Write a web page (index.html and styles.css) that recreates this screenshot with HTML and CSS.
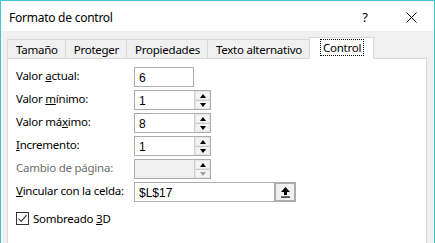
FILE: index.html
```html
<!DOCTYPE html>
<html lang="es">
<head>
<meta charset="utf-8">
<link rel="stylesheet" href="styles.css">
</head>
<body>
<div class="window">
  <div class="titlebar">
    <span class="title">Formato de control</span>
    <span class="help">?</span>
    <span class="close">
      <svg width="11" height="11" viewBox="0 0 11 11"><path d="M0.5 0.5 L10.5 10.5 M10.5 0.5 L0.5 10.5" stroke="#000" stroke-width="1"/></svg>
    </span>
  </div>
  <div class="client">
    <div class="tabs">
      <div class="tab">Tamaño</div>
      <div class="tab">Proteger</div>
      <div class="tab">Propiedades</div>
      <div class="tab">Texto alternativo</div>
      <div class="tab active"><span class="focus">Control</span></div>
    </div>
    <div class="panel">
      <div class="form">
        <label class="lbl">Valor <u>a</u>ctual:</label>
        <div class="field short"><span class="val">6</span></div>

        <label class="lbl">Valor <u>m</u>ínimo:</label>
        <div class="field spin"><span class="val">1</span>
          <span class="spinner"><span class="sb"><i class="up"></i></span><span class="sb"><i class="down"></i></span></span>
        </div>

        <label class="lbl">Valor má<u>x</u>imo:</label>
        <div class="field spin"><span class="val">8</span>
          <span class="spinner"><span class="sb"><i class="up"></i></span><span class="sb"><i class="down"></i></span></span>
        </div>

        <label class="lbl"><u>I</u>ncremento:</label>
        <div class="field spin"><span class="val">1</span>
          <span class="spinner"><span class="sb"><i class="up"></i></span><span class="sb"><i class="down"></i></span></span>
        </div>

        <label class="lbl disabled">Cambio de página:</label>
        <div class="field spin off"><span class="val"></span>
          <span class="spinner"><span class="sb"><i class="up"></i></span><span class="sb"><i class="down dim"></i></span></span>
        </div>

        <label class="lbl"><u>V</u>incular con la celda:</label>
        <div class="field long"><span class="val">$L$17</span>
          <span class="refbtn">
            <svg width="11" height="12" viewBox="0 0 11 12"><path d="M5.5 1 L10 6 L7 6 L7 9 L4 9 L4 6 L1 6 Z" fill="#000"/><rect x="1" y="10.5" width="9" height="1.2" fill="#000"/></svg>
          </span>
        </div>
      </div>
      <div class="check">
        <span class="box">
          <svg width="11" height="11" viewBox="0 0 11 11"><path d="M1.5 5.5 L4.2 8.4 L9.6 2.2" fill="none" stroke="#333" stroke-width="1.1"/></svg>
        </span>
        <span>Sombreado <u>3</u>D</span>
      </div>
    </div>
  </div>
</div>
</body>
</html>
```

FILE: styles.css
```css
* { box-sizing: border-box; }
html, body { margin: 0; padding: 0; }
body {
  width: 435px;
  height: 243px;
  overflow: hidden;
  background: #f0f0f0;
  font-family: "Noto Sans", "Open Sans", sans-serif;
  font-size: 11.5px;
  letter-spacing: -0.25px;
  color: #000;
}
u { text-decoration: underline; text-underline-offset: 1px; }

.window {
  width: 435px;
  height: 243px;
  border: 1px solid #3bc8d2;
  border-bottom: none;
  display: flex;
  flex-direction: column;
}

.titlebar {
  height: 30px;
  background: #fff;
  display: flex;
  align-items: center;
  flex: none;
}
.title {
  padding-left: 8px;
  font-size: 12px;
  flex: 1;
  margin-top: 2px;
}
.help {
  width: 46px;
  text-align: center;
  font-size: 13px;
  margin-top: 2px;
}
.close {
  width: 46px;
  display: flex;
  justify-content: center;
  margin-top: 2px;
}

.client {
  flex: 1;
  background: #f0f0f0;
  padding: 7px 7px 0 6px;
  display: flex;
  flex-direction: column;
}

.tabs {
  display: flex;
  align-items: flex-end;
  height: 21px;
  position: relative;
  z-index: 1;
  margin-bottom: -1px;
}
.tab {
  height: 20px;
  padding: 1px 7px 0 8px;
  border: 1px solid #d9d9d9;
  border-right: none;
  background: #f0f0f0;
  display: flex;
  align-items: center;
}
.tab.active {
  height: 22px;
  background: #fff;
  border-right: 1px solid #d9d9d9;
  border-bottom-color: #fff;
  padding: 0 10px 1px 11px;
}
.focus {
  outline: 1px dotted #000;
  outline-offset: 0;
  padding: 0 2px;
  line-height: 15px;
}

.panel {
  flex: 1;
  background: #fff;
  border: 1px solid #d9d9d9;
  border-bottom: none;
  padding: 8px 0 0 8px;
}

.form {
  display: grid;
  grid-template-columns: 118px auto;
  row-gap: 3px;
  align-items: center;
}
.lbl {
  line-height: 20px;
  margin-top: -2px;
}
.lbl.disabled { color: #6d6d6d; }

.field {
  height: 20px;
  border: 1px solid #acacac;
  background: #fff;
  display: flex;
  align-items: center;
}
.field.short { width: 60px; }
.field.spin { width: 77px; }
.field.long { width: 162px; }
.field.off { background: #f0f0f0; }
.val {
  flex: 1;
  padding-left: 4px;
  padding-top: 1px;
  font-family: "Liberation Sans", Arial, sans-serif;
  font-size: 12px;
  letter-spacing: 0;
}

.spinner {
  width: 16px;
  height: 18px;
  display: flex;
  flex-direction: column;
  border-left: 1px solid #cfcfcf;
}
.sb {
  flex: 1;
  display: flex;
  align-items: center;
  justify-content: center;
  background: #f3f3f3;
  border: 1px solid #e6e6e6;
}
.sb + .sb { border-top: 1px solid #c8c8c8; }
.up, .down {
  width: 0; height: 0;
  border-left: 3.5px solid transparent;
  border-right: 3.5px solid transparent;
}
.up { border-bottom: 4px solid #000; }
.down { border-top: 4px solid #000; }
.down.dim { border-top-color: #a0a0a0; }

.refbtn {
  width: 22px;
  height: 20px;
  margin: -1px -1px -1px 0;
  border: 2px solid #acacac;
  background: #f0f0f0;
  display: flex;
  align-items: center;
  justify-content: center;
}

.check {
  display: flex;
  align-items: center;
  gap: 4px;
  margin-top: 9px;
}
.box {
  width: 13px;
  height: 13px;
  border: 1px solid #333;
  display: flex;
  align-items: center;
  justify-content: center;
  background: #fff;
}
```
